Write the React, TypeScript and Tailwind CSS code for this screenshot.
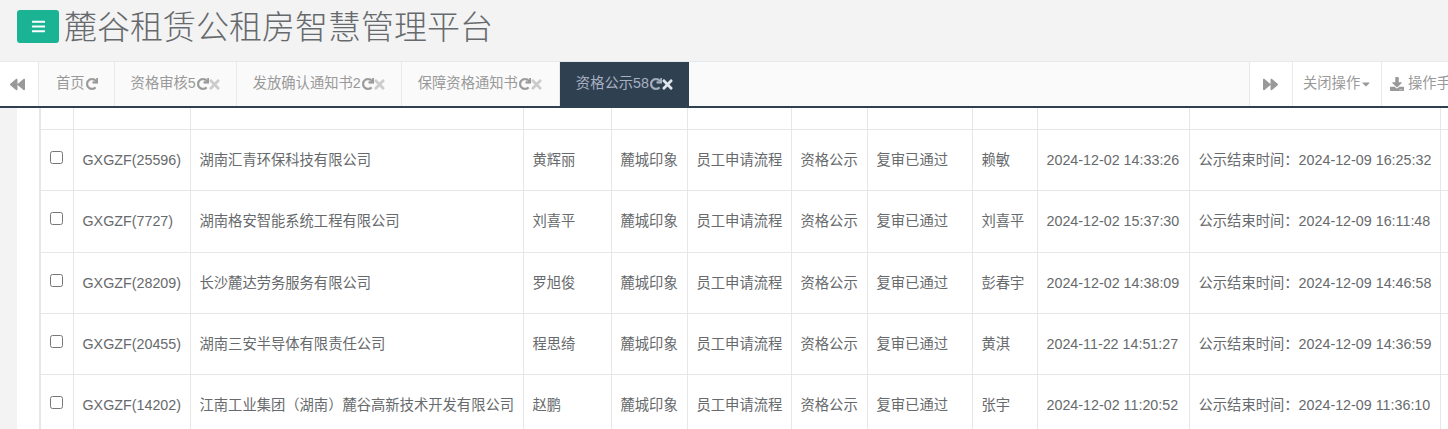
import { FaBars, FaBackward, FaForward, FaRedo, FaTimes, FaDownload, FaCaretDown } from "react-icons/fa";

const FONT = "font-['Liberation_Sans','Noto_Sans_CJK_SC',sans-serif]";

const tabs = [
  { label: "首页", close: false, pad: "pl-[17px] pr-[16px]" },
  { label: "资格审核5", close: true, pad: "px-[16px]" },
  { label: "发放确认通知书2", close: true, pad: "px-[16px]" },
  { label: "保障资格通知书", close: true, pad: "pl-[16px] pr-[17px]" },
];

const rows = [
  ["GXGZF(25596)", "湖南汇青环保科技有限公司", "黄辉丽", "赖敏", "2024-12-02 14:33:26", "2024-12-09 16:25:32", "h-[61px]"],
  ["GXGZF(7727)", "湖南格安智能系统工程有限公司", "刘喜平", "刘喜平", "2024-12-02 15:37:30", "2024-12-09 16:11:48", "h-[62px]"],
  ["GXGZF(28209)", "长沙麓达劳务服务有限公司", "罗旭俊", "彭春宇", "2024-12-02 14:38:09", "2024-12-09 14:46:58", "h-[61px]"],
  ["GXGZF(20455)", "湖南三安半导体有限责任公司", "程思绮", "黄淇", "2024-11-22 14:51:27", "2024-12-09 14:36:59", "h-[61px]"],
  ["GXGZF(14202)", "江南工业集团（湖南）麓谷高新技术开发有限公司", "赵鹏", "张宇", "2024-12-02 11:20:52", "2024-12-09 11:36:10", "h-[61px]"],
];

const widths = ["w-[33px]", "w-[117px]", "w-[333px]", "w-[88px]", "w-[76px]", "w-[104px]", "w-[76px]", "w-[105px]", "w-[65px]", "w-[152px]", "w-[251px]", "w-[120px]"];

const Cell = ({ children }: { children?: React.ReactNode }) => (
  <td className="border border-[#e7e7e7] px-[9px] pt-[2px] align-middle whitespace-nowrap overflow-hidden">{children}</td>
);

const Redo = () => <FaRedo className="w-[12px] h-[12px] stroke-[24px] ml-[1px] shrink-0" />;

export default function App() {
  return (
    <div className={`${FONT} w-[1448px] h-[429px] overflow-hidden bg-[#f3f3f4] text-[14.3px] text-[#676a6c]`}>
      <header className="h-[61px] flex items-start pl-[17px] pt-[10px] gap-[5px]">
        <button className="w-[42px] h-[33px] rounded-[3px] bg-[#1ab394] text-white flex items-center justify-center">
          <FaBars className="w-[15px] h-[15px]" />
        </button>
        <h1 className="text-[33px] leading-[36px] font-light text-[#676a6c] whitespace-nowrap">麓谷租赁公租房智慧管理平台</h1>
      </header>

      <nav className="h-[47px] flex bg-[#fafafa] border-t border-[#e7eaec] border-b-2 border-b-[#2f4050] text-[#999] overflow-hidden">
        <div className="w-[39px] shrink-0 bg-white border-r border-[#e7eaec] pl-[10px] flex items-center">
          <FaBackward className="w-[15px] h-[15px]" />
        </div>
        {tabs.map((t) => (
          <div key={t.label} className={`shrink-0 ${t.pad} border-r border-[#e7eaec] flex items-center whitespace-nowrap`}>
            {t.label}
            <Redo />
            {t.close && <FaTimes className="w-[11px] h-[15px] text-[#ccc] shrink-0" />}
          </div>
        ))}
        <div className="shrink-0 px-[16px] bg-[#2f4050] text-[#a7b1c2] flex items-center whitespace-nowrap">
          资格公示58
          <Redo />
          <FaTimes className="w-[11px] h-[15px] text-[#dfe4ed] shrink-0" />
        </div>
        <div className="flex-1" />
        <div className="w-[44px] shrink-0 bg-white border-x border-[#e7eaec] flex items-center justify-center">
          <FaForward className="w-[15px] h-[15px] -ml-[2px]" />
        </div>
        <div className="w-[89px] shrink-0 bg-white border-r border-[#e7eaec] flex items-center pl-[10px] whitespace-nowrap">
          关闭操作
          <FaCaretDown className="w-[12px] h-[12px] shrink-0" />
        </div>
        <div className="w-[66px] shrink-0 bg-white flex items-center pl-[8px] gap-[4px] whitespace-nowrap overflow-hidden">
          <FaDownload className="w-[14px] h-[14px] shrink-0" />
          <span>操作手册</span>
        </div>
      </nav>

      <main className="ml-[17px] h-[321px] bg-white pl-[22px] overflow-hidden">
        <table className="table-fixed border-collapse w-[1520px] border-l-2 border-[#e7e7e7]">
          <colgroup>
            {widths.map((w, i) => (
              <col key={i} className={w} />
            ))}
          </colgroup>
          <tbody>
            <tr className="h-[21px]">
              {widths.map((_, i) => (
                <td key={i} className="border border-t-0 border-[#e7e7e7]" />
              ))}
            </tr>
            {rows.map((r) => (
              <tr key={r[0]} className={r[6]}>
                <td className="border border-[#e7e7e7] text-center align-middle">
                  <input type="checkbox" className="w-[13px] h-[13px]" />
                </td>
                <Cell>{r[0]}</Cell>
                <Cell>{r[1]}</Cell>
                <Cell>{r[2]}</Cell>
                <Cell>麓城印象</Cell>
                <Cell>员工申请流程</Cell>
                <Cell>资格公示</Cell>
                <Cell>复审已通过</Cell>
                <Cell>{r[3]}</Cell>
                <Cell>{r[4]}</Cell>
                <Cell>公示结束时间：{r[5]}</Cell>
                <Cell />
              </tr>
            ))}
          </tbody>
        </table>
      </main>
    </div>
  );
}
